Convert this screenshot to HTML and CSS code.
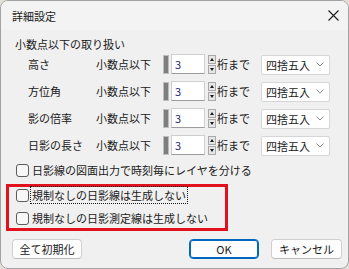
FILE: index.html
```html
<!DOCTYPE html>
<html lang="ja">
<head>
<meta charset="utf-8">
<title>詳細設定</title>
<link rel="stylesheet" href="styles.css">
</head>
<body>
<div class="window">
  <div class="titlebar">
    <span class="title">詳細設定</span>
    <span class="close">
      <svg width="11" height="11" viewBox="0 0 11 11"><path d="M0.5 0.5 L10.5 10.5 M10.5 0.5 L0.5 10.5" stroke="#1c1c1c" stroke-width="1.1" fill="none"/></svg>
    </span>
  </div>
  <div class="content">
    <div class="section">小数点以下の取り扱い</div>
    <div class="rows">
      <div class="row">
        <span class="label">高さ</span>
        <span class="sub">小数点以下</span>
        <span class="bar"></span>
        <span class="input">3</span>
        <span class="spin"><span class="up"></span><span class="down"></span></span>
        <span class="unit">桁まで</span>
        <span class="select"><span>四捨五入</span><svg width="8" height="5" viewBox="0 0 8 5"><path d="M0.5 0.5 L4 4 L7.5 0.5" stroke="#8a8a8a" fill="none"/></svg></span>
      </div>
      <div class="row">
        <span class="label">方位角</span>
        <span class="sub">小数点以下</span>
        <span class="bar"></span>
        <span class="input">3</span>
        <span class="spin"><span class="up"></span><span class="down"></span></span>
        <span class="unit">桁まで</span>
        <span class="select"><span>四捨五入</span><svg width="8" height="5" viewBox="0 0 8 5"><path d="M0.5 0.5 L4 4 L7.5 0.5" stroke="#8a8a8a" fill="none"/></svg></span>
      </div>
      <div class="row">
        <span class="label">影の倍率</span>
        <span class="sub">小数点以下</span>
        <span class="bar"></span>
        <span class="input">3</span>
        <span class="spin"><span class="up"></span><span class="down"></span></span>
        <span class="unit">桁まで</span>
        <span class="select"><span>四捨五入</span><svg width="8" height="5" viewBox="0 0 8 5"><path d="M0.5 0.5 L4 4 L7.5 0.5" stroke="#8a8a8a" fill="none"/></svg></span>
      </div>
      <div class="row">
        <span class="label">日影の長さ</span>
        <span class="sub">小数点以下</span>
        <span class="bar"></span>
        <span class="input">3</span>
        <span class="spin"><span class="up"></span><span class="down"></span></span>
        <span class="unit">桁まで</span>
        <span class="select"><span>四捨五入</span><svg width="8" height="5" viewBox="0 0 8 5"><path d="M0.5 0.5 L4 4 L7.5 0.5" stroke="#8a8a8a" fill="none"/></svg></span>
      </div>
    </div>
    <div class="check first"><span class="box"></span><span class="text">日影線の図面出力で時刻毎にレイヤを分ける</span></div>
    <div class="highlight">
      <div class="check"><span class="box"></span><span class="text focus">規制なしの日影線は生成しない</span></div>
      <div class="check"><span class="box"></span><span class="text">規制なしの日影測定線は生成しない</span></div>
    </div>
    <div class="buttons">
      <span class="btn">全て初期化</span>
      <span class="spacer"></span>
      <span class="btn primary">OK</span>
      <span class="btn">キャンセル</span>
    </div>
  </div>
</div>
</body>
</html>
```
FILE: styles.css
```css
html, body {
  margin: 0;
  padding: 0;
  background: #e4dfd8;
}
body {
  font-family: "Noto Sans CJK JP", "Noto Sans", sans-serif;
  font-size: 11px;
  color: #1a1a1a;
}
.window {
  width: 349px;
  height: 269px;
  box-sizing: border-box;
  border: 1px solid #a3a3a3;
  border-radius: 8px;
  overflow: hidden;
  background: #f0f0f0;
}
.titlebar {
  height: 29px;
  background: #f3f3f3;
  display: flex;
  align-items: center;
  justify-content: space-between;
  padding: 0 9px 0 11px;
}
.title {
  font-size: 11px;
  line-height: 16px;
  margin-top: 1px;
}
.close {
  display: flex;
  width: 11px;
  height: 11px;
  margin-bottom: 1px;
}
.content {
  display: flex;
  flex-direction: column;
}
.section {
  line-height: 16px;
  margin: 6px 0 0 14px;
}
.rows {
  display: flex;
  flex-direction: column;
  gap: 7px;
  margin-top: 2px;
  padding-left: 27px;
}
.row {
  display: flex;
  align-items: center;
  height: 20px;
}
.label {
  width: 68px;
  line-height: 16px;
}
.sub {
  width: 67px;
  line-height: 16px;
}
.bar {
  width: 4px;
  height: 19px;
  background: #7e7e7e;
  border: 1px solid #bdbdbd;
  box-sizing: border-box;
  width: 6px;
}
.input {
  width: 34px;
  height: 20px;
  box-sizing: border-box;
  margin-left: 2px;
  background: #ffffff;
  border: 1px solid #cfcfcf;
  border-bottom-color: #9c9c9c;
  padding-left: 3px;
  line-height: 18px;
  color: #1f2a78;
}
.spin {
  display: flex;
  flex-direction: column;
  gap: 1px;
  margin-left: 3px;
  width: 8px;
}
.spin span {
  position: relative;
  height: 9px;
  box-sizing: border-box;
  border: 1px solid #a8a8a8;
  background: #e6e6e6;
}
.spin .up::after,
.spin .down::after {
  content: "";
  position: absolute;
  left: 1px;
  width: 0;
  height: 0;
  border-left: 2.5px solid transparent;
  border-right: 2.5px solid transparent;
}
.spin .up::after {
  top: 2px;
  border-bottom: 3px solid #1a1a1a;
}
.spin .down::after {
  top: 2px;
  border-top: 3px solid #1a1a1a;
}
.unit {
  margin-left: 1px;
  line-height: 16px;
}
.select {
  margin-left: 11px;
  width: 69px;
  height: 20px;
  box-sizing: border-box;
  background: #ffffff;
  border: 1px solid #d6d6d6;
  border-radius: 2px;
  display: flex;
  align-items: center;
  justify-content: space-between;
  padding: 0 5px 0 4px;
  line-height: 16px;
  margin-top: 1px;
}
.check {
  display: flex;
  align-items: center;
  height: 16px;
  gap: 3px;
}
.check.first {
  margin: 7px 0 0 15px;
}
.box {
  width: 13px;
  height: 13px;
  box-sizing: border-box;
  border: 1px solid #5c5c5c;
  border-radius: 3px;
  background: #f7f7f7;
}
.text {
  line-height: 16px;
}
.focus {
  outline: 1px dotted #1a1a1a;
  outline-offset: 0;
  padding: 0 1px 0 0;
  margin-left: -1px;
  padding-left: 1px;
}
.highlight {
  width: 222px;
  box-sizing: border-box;
  margin: 6px 0 0 5px;
  border: 3px solid #e3111d;
  padding: 0 0 2px 7px;
  display: flex;
  flex-direction: column;
  gap: 7px;
}
.buttons {
  display: flex;
  align-items: center;
  margin-top: 8px;
  padding: 0 6px 0 11px;
  gap: 12px;
}
.spacer {
  flex: 1;
}
.btn {
  width: 70px;
  height: 20px;
  box-sizing: border-box;
  border: 1px solid #d0d0d0;
  border-bottom-color: #bcbcbc;
  border-radius: 4px;
  background: #fdfdfd;
  display: flex;
  align-items: center;
  justify-content: center;
  line-height: 16px;
}
.btn.primary {
  border: 1px solid #0067c0;
  box-shadow: inset 0 0 0 1px #0067c0;
}
.btn:last-child {
  width: 71px;
}
```
